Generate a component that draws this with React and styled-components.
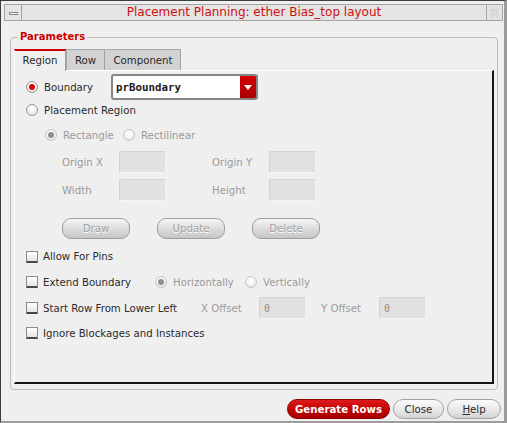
import React from "react";
import styled, { createGlobalStyle } from "styled-components";

const Global = createGlobalStyle`
  html, body { margin: 0; padding: 0; background: #efefef; }
  body { font-family: "DejaVu Sans", Verdana, sans-serif; font-size: 10.2px; color: #2b2b2b; }
  * { box-sizing: border-box; }
`;

const Window = styled.div`
  width: 507px;
  height: 423px;
  background: #efefef;
  border-left: 1px solid #3c3c3c;
  border-top: 1px solid #3c3c3c;
  border-right: 3px solid #9c9c9c;
  border-bottom: 2px solid #9c9c9c;
  display: flex;
  flex-direction: column;
`;

const TitleBar = styled.div`
  display: flex;
  height: 17px;
  margin: 3px 1px 0 3px;
`;

const TitleButton = styled.div`
  width: ${(p) => p.$w}px;
  flex: none;
  background: #e4e4e4;
  border: 1px solid #a4a4a4;
  display: flex;
  align-items: center;
  justify-content: center;
`;

const MinusGlyph = styled.span`
  width: 9px;
  height: 3px;
  border: 1px solid #8a8a8a;
  background: #fafafa;
  margin-top: 1px;
`;

const TitleText = styled.div`
  flex: 1;
  background: #e4e4e4;
  border-top: 1px solid #a4a4a4;
  border-bottom: 1px solid #a4a4a4;
  color: #cc1010;
  font-size: 12px;
  line-height: 15px;
  text-align: center;
`;

const GroupBox = styled.div`
  position: relative;
  flex: 1;
  margin: 16px 6px 0 9px;
  border: 1px solid #bcbcbc;
  border-radius: 4px;
  padding: 11px 3px 5px 3px;
  display: flex;
  flex-direction: column;
`;

const Legend = styled.span`
  position: absolute;
  top: -7px;
  left: 7px;
  padding: 0 2px;
  background: #efefef;
  color: #cc0000;
  font-weight: bold;
  font-size: 10px;
  line-height: 12px;
`;

const TabBar = styled.div`
  display: flex;
  height: 21px;
  position: relative;
  z-index: 1;
`;

const Tab = styled.div`
  width: ${(p) => p.$w}px;
  height: ${(p) => (p.$active ? 22 : 21)}px;
  text-align: center;
  line-height: 12px;
  color: #2b2b2b;
  background: ${(p) => (p.$active ? "#efefef" : "#d2d2d2")};
  border-top: ${(p) => (p.$active ? "2px solid #cc0000" : "1px solid #a8a8a8")};
  border-left: 1px solid ${(p) => (p.$active ? "#ffffff" : p.$noLeft ? "transparent" : "#a8a8a8")};
  border-right: 1px solid #a0a0a0;
  padding-top: ${(p) => (p.$active ? 4 : 5)}px;
`;

const Panel = styled.div`
  flex: 1;
  border-top: 1px solid #ffffff;
  border-left: 1px solid #ffffff;
  border-right: 2px solid #151515;
  border-bottom: 2px solid #151515;
  padding: 3px 0 0 11px;
  display: flex;
  flex-direction: column;
`;

const Row = styled.div`
  display: flex;
  align-items: center;
  height: ${(p) => p.$h}px;
  margin-top: ${(p) => p.$mt || 0}px;
  padding-left: ${(p) => p.$indent || 0}px;
`;

const RadioCircle = styled.span`
  width: 12px;
  height: 12px;
  flex: none;
  border-radius: 50%;
  border: 1px solid ${(p) => (p.$disabled ? "#c6c6c6" : "#9a9a9a")};
  background: radial-gradient(circle at 50% 40%, #ffffff 0%, #f6f6f6 45%, #d6d6d6 100%);
  display: flex;
  align-items: center;
  justify-content: center;
  &::after {
    content: "";
    display: ${(p) => (p.$checked ? "block" : "none")};
    width: 6px;
    height: 6px;
    border-radius: 50%;
    background: ${(p) => (p.$disabled ? "#8e8e8e" : "#d80000")};
  }
`;

const CheckBox = styled.span`
  width: 12px;
  height: 12px;
  flex: none;
  border: 1px solid #8c8c8c;
  border-bottom: 2px solid #4a4a4a;
  border-radius: 1px;
  background: linear-gradient(#ffffff, #e4e4e4);
`;

const Label = styled.span`
  flex: none;
  width: ${(p) => (p.$w ? `${p.$w}px` : "auto")};
  margin-left: ${(p) => p.$ml || 0}px;
  color: ${(p) => (p.$disabled ? "#9a9a9a" : "#2b2b2b")};
  white-space: nowrap;
`;

const Combo = styled.div`
  width: 147px;
  height: 26px;
  border: 2px solid #858585;
  border-radius: 3px;
  background: #ffffff;
  display: flex;
  overflow: hidden;
`;

const ComboText = styled.span`
  flex: 1;
  padding-left: 3px;
  display: flex;
  align-items: center;
  font-family: "DejaVu Sans Mono", "Liberation Mono", monospace;
  font-weight: bold;
  font-size: 10.8px;
  color: #1a1a1a;
`;

const ComboArrow = styled.span`
  width: 16px;
  flex: none;
  background: linear-gradient(#d40000, #a80000);
  display: flex;
  align-items: center;
  justify-content: center;
  padding-top: 1px;
`;

const Field = styled.div`
  width: 47px;
  height: 22px;
  flex: none;
  background: #e1e1e1;
  border: 1px solid #d2d2d2;
  border-bottom-color: #f6f6f6;
  border-right-color: #f0f0f0;
  border-radius: 2px;
  padding-left: 4px;
  display: flex;
  align-items: center;
  font-family: "DejaVu Sans Mono", "Liberation Mono", monospace;
  font-size: 10px;
  color: #8c8c8c;
`;

const Spacer = styled.span`
  width: ${(p) => p.$w}px;
  flex: none;
`;

const PanelButton = styled.div`
  width: 68px;
  height: 21px;
  flex: none;
  border: 1px solid #9e9e9e;
  border-radius: 9px;
  background: linear-gradient(#f6f6f6, #d8d8d8 60%, #c6c6c6);
  color: #a2a2a2;
  text-shadow: 0 1px 0 #ffffff;
  display: flex;
  align-items: center;
  justify-content: center;
  margin-right: 27px;
`;

const Footer = styled.div`
  height: 31px;
  display: flex;
  justify-content: flex-end;
  gap: 3px;
  padding: 9px 3px 2px 0;
`;

const FooterButton = styled.div`
  width: ${(p) => p.$w}px;
  height: 20px;
  border-radius: 10px;
  display: flex;
  align-items: center;
  justify-content: center;
  border: 1px solid ${(p) => (p.$primary ? "#8c0000" : "#a2a2a2")};
  background: ${(p) =>
    p.$primary
      ? "linear-gradient(#dc1c1c, #c20000 55%, #a80000)"
      : "linear-gradient(#fbfbfb, #e6e6e6 60%, #d2d2d2)"};
  color: ${(p) => (p.$primary ? "#ffffff" : "#2b2b2b")};
  font-weight: ${(p) => (p.$primary ? "bold" : "normal")};
`;

const Underline = styled.span`
  text-decoration: underline;
`;

const Radio = ({ checked, disabled, label, w, ml = 6 }) => (
  <>
    <RadioCircle $checked={checked} $disabled={disabled} />
    <Label $ml={ml} $w={w} $disabled={disabled}>
      {label}
    </Label>
  </>
);

const Check = ({ label, w }) => (
  <>
    <CheckBox />
    <Label $ml={5} $w={w}>
      {label}
    </Label>
  </>
);

export default function App() {
  return (
    <>
      <Global />
      <Window>
        <TitleBar>
          <TitleButton $w={18}>
            <MinusGlyph />
          </TitleButton>
          <TitleText>Placement Planning: ether Bias_top layout</TitleText>
          <TitleButton $w={17}>
            <svg width="11" height="11" viewBox="0 0 11 11">
              <path d="M1 1 L10 10 M10 1 L1 10" stroke="#cdcdcd" strokeWidth="3" />
              <path d="M1 1 L10 10 M10 1 L1 10" stroke="#f2f2f2" strokeWidth="1" />
            </svg>
          </TitleButton>
        </TitleBar>

        <GroupBox>
          <Legend>Parameters</Legend>
          <TabBar>
            <Tab $w={52} $active>
              Region
            </Tab>
            <Tab $w={39}>Row</Tab>
            <Tab $w={76} $noLeft>
              Component
            </Tab>
          </TabBar>
          <Panel>
            <Row $h={26}>
              <Radio checked label="Boundary" w={67} />
              <Combo>
                <ComboText>prBoundary</ComboText>
                <ComboArrow>
                  <svg width="8" height="5" viewBox="0 0 8 5">
                    <path d="M0 0 H8 L4 5 Z" fill="#ffffff" />
                  </svg>
                </ComboArrow>
              </Combo>
            </Row>
            <Row $h={20}>
              <Radio label="Placement Region" />
            </Row>
            <Row $h={30} $indent={19}>
              <Radio checked disabled label="Rectangle" w={60} />
              <Radio disabled label="Rectilinear" />
            </Row>
            <Row $h={22} $mt={1} $indent={36}>
              <Label $w={57} $disabled>Origin X</Label>
              <Field />
              <Spacer $w={46} />
              <Label $w={57} $disabled>Origin Y</Label>
              <Field />
            </Row>
            <Row $h={22} $mt={6} $indent={36}>
              <Label $w={57} $disabled>Width</Label>
              <Field />
              <Spacer $w={46} />
              <Label $w={57} $disabled>Height</Label>
              <Field />
            </Row>
            <Row $h={21} $mt={17} $indent={36}>
              <PanelButton>Draw</PanelButton>
              <PanelButton>Update</PanelButton>
              <PanelButton>Delete</PanelButton>
            </Row>
            <Row $h={21} $mt={7}>
              <Check label="Allow For Pins" />
            </Row>
            <Row $h={20} $mt={5}>
              <Check label="Extend Boundary" w={112} />
              <Radio checked disabled label="Horizontally" w={72} />
              <Radio disabled label="Vertically" />
            </Row>
            <Row $h={22} $mt={5}>
              <Check label="Start Row From Lower Left" w={158} />
              <Label $w={58} $disabled>X Offset</Label>
              <Field>0</Field>
              <Spacer $w={15} />
              <Label $w={58} $disabled>Y Offset</Label>
              <Field>0</Field>
            </Row>
            <Row $h={22} $mt={3}>
              <Check label="Ignore Blockages and Instances" />
            </Row>
          </Panel>
        </GroupBox>

        <Footer>
          <FooterButton $w={103} $primary>
            Generate Rows
          </FooterButton>
          <FooterButton $w={51}>Close</FooterButton>
          <FooterButton $w={54}>
            <Underline>H</Underline>elp
          </FooterButton>
        </Footer>
      </Window>
    </>
  );
}
